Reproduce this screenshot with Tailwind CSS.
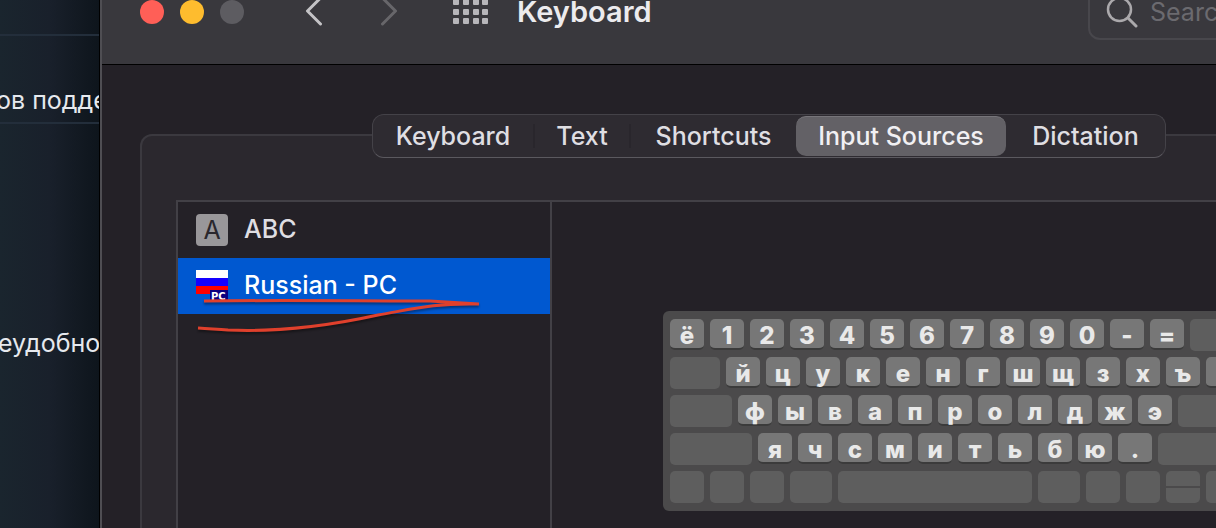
<!DOCTYPE html>
<html lang="en">
<head>
  <meta charset="UTF-8">
  <meta name="viewport" content="width=device-width, initial-scale=1.0">
  <title>Keyboard</title>
  <script src="https://cdn.jsdelivr.net/npm/@tailwindcss/browser@4"></script>
</head>
<body class="h-screen overflow-hidden flex bg-[#19222d] font-['Inter','Liberation_Sans',sans-serif] text-[#dfdee2]">

  <!-- Page behind the window -->
  <aside class="w-[100px] shrink-0 overflow-hidden whitespace-nowrap border-r border-black bg-linear-to-r from-[#1a252e] via-[#19202b] to-[#0e151c] pt-[34px] text-[25px] text-[#e6e9ee]">
    <p class="h-[90px] border-y-2 border-[#232e3b] pt-[46px] leading-9"><span class="-ml-1">ов поддерживает</span></p>
    <p class="mt-[201px] leading-9"><span class="-ml-0.5">еудобно</span></p>
  </aside>

  <!-- Preferences window -->
  <div class="w-[calc(100vw+120px)] shrink-0 flex flex-col border-l-2 border-[#4f4e53] bg-[#242127]">
    <header class="h-[65px] shrink-0 border-b border-black bg-[#39383d]">
      <div class="h-6 flex items-center pl-[38px] pr-7">
        <div class="flex gap-4">
          <button aria-label="Close" class="size-6 rounded-full bg-[#ff5f57]"></button>
          <button aria-label="Minimize" class="size-6 rounded-full bg-[#febc2e]"></button>
          <button aria-label="Zoom" class="size-6 rounded-full bg-[#5d5c61]"></button>
        </div>
        <button aria-label="Back" class="ml-[60px]">
          <svg class="w-5 h-8" viewBox="0 0 20 32" fill="none" stroke="#c4c3c6" stroke-width="3" stroke-linecap="round" stroke-linejoin="round"><path d="M16.500 2L3.500 15L16.500 28"/></svg>
        </button>
        <button aria-label="Forward" class="ml-[54px]">
          <svg class="w-5 h-8" viewBox="0 0 20 32" fill="none" stroke="#67666a" stroke-width="3" stroke-linecap="round" stroke-linejoin="round"><path d="M4.500 2L17.500 15L4.500 28"/></svg>
        </button>
        <button aria-label="Show all" class="ml-[55px]">
          <svg class="w-9 h-[26px]" viewBox="0 0 36 26" fill="#b7b6ba">
            <rect x="0" y="0" width="6" height="6" rx="1"/><rect x="10" y="0" width="6" height="6" rx="1"/><rect x="20" y="0" width="6" height="6" rx="1"/><rect x="29" y="0" width="6" height="6" rx="1"/>
            <rect x="0" y="10" width="6" height="6" rx="1"/><rect x="10" y="10" width="6" height="6" rx="1"/><rect x="20" y="10" width="6" height="6" rx="1"/><rect x="29" y="10" width="6" height="6" rx="1"/>
            <rect x="0" y="19" width="6" height="6" rx="1"/><rect x="10" y="19" width="6" height="6" rx="1"/><rect x="20" y="19" width="6" height="6" rx="1"/><rect x="29" y="19" width="6" height="6" rx="1"/>
          </svg>
        </button>
        <h1 class="ml-7 text-[29px] leading-8 font-semibold text-[#ecebee]">Keyboard</h1>
        <label class="ml-auto w-80 h-14 flex items-center gap-3 rounded-xl border-2 border-[#48474c] pl-4">
          <svg class="size-8 shrink-0" viewBox="0 0 32 32" fill="none" stroke="#aba9ac" stroke-linecap="round"><circle cx="13.500" cy="13.500" r="11.500" stroke-width="2.500"/><path d="M22 22L30 30" stroke-width="3"/></svg>
          <input type="search" aria-label="Search" placeholder="Search" class="min-w-0 flex-1 bg-transparent pt-0.5 text-[25px] outline-none placeholder:text-[#6b6a6f]">
        </label>
      </div>
    </header>

    <main class="flex-1 flex flex-col px-[38px] pt-[49px]">
      <!-- Tabs -->
      <div role="tablist" class="relative z-10 -mb-6 h-11 self-center flex items-center rounded-xl border border-[#444248] border-b-[#5b595f] bg-[#2e2b31] text-[25px] font-medium">
        <button role="tab" class="w-[162px] h-6 border-r-2 border-[#29262c] leading-6">Keyboard</button>
        <button role="tab" class="w-24 h-6 border-r-2 border-[#29262c] leading-6">Text</button>
        <button role="tab" class="w-[165px] leading-6">Shortcuts</button>
        <button role="tab" aria-selected="true" class="w-[210px] h-10 rounded-[10px] border-t border-[#77757a] bg-[#636166] pb-0.5 leading-6 text-[#f1f0f3]">Input Sources</button>
        <button role="tab" class="w-[159px] leading-6">Dictation</button>
      </div>

      <div class="flex-1 flex flex-col rounded-t-xl border-2 border-b-0 border-[#3b393f] bg-[#2b282e] px-[34px] pt-16">
        <div class="flex-1 flex border-2 border-b-0 border-[#424046] bg-[#242127]">

          <!-- Source list -->
          <div class="relative w-[374px] shrink-0 border-r-2 border-[#424046] text-[25px] font-medium">
            <button class="w-full h-14 flex items-center gap-4 pl-[18px]">
              <span class="size-8 rounded bg-[#99979a] text-center font-normal leading-8 text-[#2a272d]">A</span>
              ABC
            </button>
            <button class="w-full h-14 flex items-center gap-4 bg-[#0058d0] pl-[18px] text-white">
              <svg class="size-8" viewBox="0 0 32 32">
                <rect width="32" height="8" fill="#fff"/>
                <rect y="8" width="32" height="8" fill="#1400ff"/>
                <rect y="16" width="32" height="8" fill="#f00"/>
                <rect x="14" y="20" width="18" height="11" fill="#0b0080"/>
                <text x="15" y="30" font-family="DejaVu Sans" font-weight="bold" font-size="10" fill="#fff">PC</text>
              </svg>
              Russian - PC
            </button>
            <!-- Red pen mark -->
            <svg class="absolute left-0 top-[88px] w-[320px] h-12 drop-shadow-[0_2px_1px_rgba(0,0,0,0.4)]" viewBox="0 0 320 48" fill="none" stroke="#e0402c" stroke-width="3">
              <path d="M26 11C100 10 180 11 252 11C270 12 284 13 301 14C255 13 235 19 200 25C150 36 95 42 50 40C38 39 32 39 20 38"/>
            </svg>
          </div>

          <!-- Layout preview -->
          <div class="flex-1 pt-[109px]">
            <div class="w-[586px] mx-auto flex flex-col gap-1.5 rounded-md bg-[#4b4a4b] px-[7px] py-2 text-center text-2xl font-extrabold text-[#e9e9e9] [&>div]:flex [&>div]:gap-1.5 [&>div]:h-8 [&_kbd]:w-[34px] [&_kbd]:h-[31px] [&_kbd]:rounded-[5px] [&_kbd]:border-b-2 [&_kbd]:border-[#3b3b3b] [&_kbd]:bg-[#777] [&_kbd]:font-['Inter','Liberation_Sans',sans-serif] [&_kbd]:leading-[34px] [&_i]:rounded-[5px] [&_i]:bg-[#5e5e5e]">
              <div>
                <kbd>ё</kbd><kbd>1</kbd><kbd>2</kbd><kbd>3</kbd><kbd>4</kbd><kbd>5</kbd><kbd>6</kbd><kbd>7</kbd><kbd>8</kbd><kbd>9</kbd><kbd>0</kbd><kbd>-</kbd><kbd>=</kbd><i class="flex-1"></i>
              </div>
              <div>
                <i class="flex-1"></i><kbd>й</kbd><kbd>ц</kbd><kbd>у</kbd><kbd>к</kbd><kbd>е</kbd><kbd>н</kbd><kbd>г</kbd><kbd>ш</kbd><kbd>щ</kbd><kbd>з</kbd><kbd>х</kbd><kbd>ъ</kbd><kbd class="mr-0.5">\</kbd>
              </div>
              <div>
                <i class="w-[62px]"></i><kbd>ф</kbd><kbd>ы</kbd><kbd>в</kbd><kbd>а</kbd><kbd>п</kbd><kbd>р</kbd><kbd>о</kbd><kbd>л</kbd><kbd>д</kbd><kbd>ж</kbd><kbd>э</kbd><i class="flex-1"></i>
              </div>
              <div>
                <i class="w-[82px]"></i><kbd>я</kbd><kbd>ч</kbd><kbd>с</kbd><kbd>м</kbd><kbd>и</kbd><kbd>т</kbd><kbd>ь</kbd><kbd>б</kbd><kbd>ю</kbd><kbd>.</kbd><i class="flex-1"></i>
              </div>
              <div>
                <i class="w-[34px]"></i><i class="w-[34px]"></i><i class="w-[34px]"></i><i class="w-[42px]"></i><i class="w-[194px]"></i><i class="w-[42px]"></i><i class="w-[34px]"></i><i class="w-[34px]"></i>
                <span class="w-[34px] flex flex-col gap-0.5"><i class="flex-1 rounded-b-none!"></i><i class="flex-1 rounded-t-none!"></i></span>
                <i class="flex-1"></i>
              </div>
            </div>
          </div>

        </div>
      </div>
    </main>
  </div>
</body>
</html>
